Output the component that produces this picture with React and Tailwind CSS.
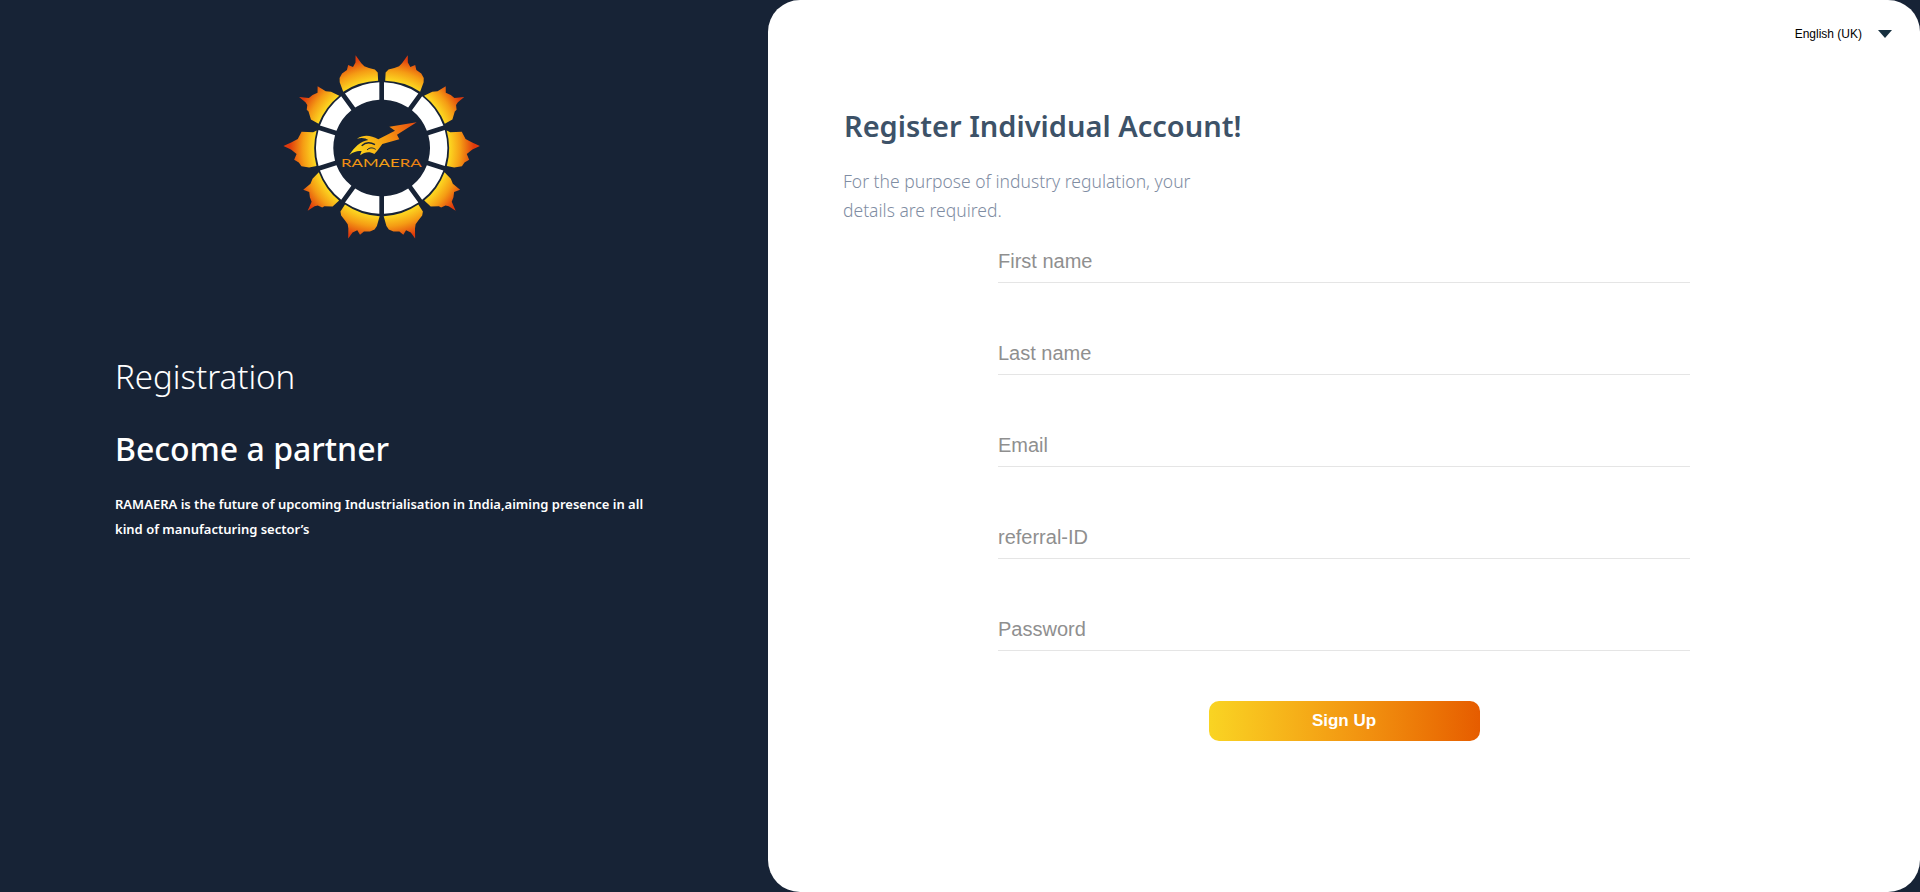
const SEGOE = "font-['Noto_Sans','Open_Sans',sans-serif]";

// flame outlines as [angle offset, radius] pairs around the petal centre
const FLAME_TOP = [
  [-15, 193], [-15, 212], [-13, 222], [-9, 230], [-6, 238], [-4.5, 250], [-2.3, 290],
  [-1, 258], [1.5, 246], [4, 258], [6, 244], [10, 241], [13, 232], [14.5, 220], [16.3, 196],
];
const FLAME_DIAG = [
  [-15, 193], [-12, 212], [-9.4, 225], [-7.9, 256], [-4.8, 242], [-1.5, 250], [1.5, 254], [4.3, 292],
  [5, 256], [6, 246], [9, 240], [9.5, 232], [14, 214], [15, 194],
];
const FLAME_SIDE = [
  [-15, 193], [-13, 203], [-11.4, 232], [-6.2, 241], [-3.5, 262], [-1.2, 296], [1, 262], [4, 244],
  [7.7, 254], [10, 240], [12.8, 234], [15, 210], [15.5, 194],
];

const polar = (deg, r) => {
  const a = (deg * Math.PI) / 180;
  return [Math.sin(a) * r, -Math.cos(a) * r];
};

const sector = (center) => {
  const half = 18;
  const gap = 7;
  const outer = 197;
  const inner = 145;
  const dOut = (Math.asin(gap / outer) * 180) / Math.PI;
  const dIn = (Math.asin(gap / inner) * 180) / Math.PI;
  const a = polar(center - half + dOut, outer);
  const b = polar(center + half - dOut, outer);
  const c = polar(center + half - dIn, inner);
  const d = polar(center - half + dIn, inner);
  return `M${a} A${outer} ${outer} 0 0 1 ${b} L${c} A${inner} ${inner} 0 0 0 ${d} Z`;
};

const flame = (center, outline) => {
  const pts = outline.map(([o, r]) => {
    const body = r > 205 && r < 270 ? 8 : 0;
    return polar(center + o, 202 + (r - 193) * 0.9 + body);
  });
  return `M${pts.map((p) => p.join(' ')).join(' L')} A204 204 0 0 0 ${pts[0]} Z`;
};

const PETALS = [
  { c: 18, outline: FLAME_TOP },
  { c: 54, outline: FLAME_DIAG },
  { c: 90, outline: FLAME_SIDE },
  { c: 126, outline: FLAME_DIAG },
  { c: 162, outline: FLAME_TOP },
];

function Logo() {
  return (
    <svg viewBox="0 0 660 630" className="w-[220px] h-[210px]">
      <defs>
        <radialGradient id="flameFill" gradientUnits="userSpaceOnUse" cx="0" cy="0" r="285">
          <stop offset="0.72" stopColor="#fcd420" />
          <stop offset="0.83" stopColor="#f59c14" />
          <stop offset="0.97" stopColor="#e03a0c" />
        </radialGradient>
        <linearGradient id="rocketFill" gradientUnits="userSpaceOnUse" x1="235" y1="340" x2="437" y2="247">
          <stop offset="0" stopColor="#fde01d" />
          <stop offset="0.45" stopColor="#f7a812" />
          <stop offset="1" stopColor="#e8480f" />
        </linearGradient>
        <linearGradient id="wordFill" gradientUnits="userSpaceOnUse" x1="210" y1="0" x2="452" y2="0">
          <stop offset="0" stopColor="#f08a12" />
          <stop offset="0.5" stopColor="#f5a516" />
          <stop offset="1" stopColor="#ec7a10" />
        </linearGradient>
      </defs>

      <g transform="translate(332 324)">
        {PETALS.map((p) => (
          <g key={p.c}>
            <path d={sector(p.c)} fill="#ffffff" />
            <path d={sector(p.c)} fill="#ffffff" transform="scale(-1 1)" />
            <path d={flame(p.c, p.outline)} fill="url(#flameFill)" />
            <path d={flame(p.c, p.outline)} fill="url(#flameFill)" transform="scale(-1 1)" />
          </g>
        ))}
      </g>

      {/* rocket */}
      <path
        d="M437 247 L355 260 L372 272 L322 298 C300 286 280 282 258 296 C272 292 284 294 292 300 C268 304 250 322 235 345 C250 334 262 332 272 334 C270 338 268 342 268 346 C280 336 296 334 310 342 C322 330 326 322 334 312 L385 298 L378 284 Z"
        fill="url(#rocketFill)"
      />
      <path d="M272 317 C284 306 298 306 312 314" fill="none" stroke="#172335" strokeWidth="4" />
      <path d="M288 330 C296 322 304 322 314 328" fill="none" stroke="#172335" strokeWidth="3" />

      <text
        x="210"
        y="380"
        textLength="242"
        lengthAdjust="spacingAndGlyphs"
        fill="url(#wordFill)"
        className="font-['Lato',sans-serif] text-[34px]"
      >
        RAMAERA
      </text>
    </svg>
  );
}

function Field({ placeholder, type = 'text' }) {
  return (
    <input
      type={type}
      placeholder={placeholder}
      className="w-full h-[42px] border-b border-[#e5e5e5] bg-transparent text-xl outline-none placeholder:text-[#8f8f8f] font-['Liberation_Sans',Arial,sans-serif]"
    />
  );
}

export default function App() {
  return (
    <div className="flex h-[892px] bg-[#172336] overflow-hidden">
      {/* Left panel */}
      <div className={`w-2/5 shrink-0 text-white ${SEGOE}`}>
        <div className="flex justify-center pt-[40px] pr-[6px]">
          <Logo />
        </div>
        <div className="pl-[115px] pr-[100px] pt-[105px]">
          <h1 className="text-[33px] font-light leading-[44px]">Registration</h1>
          <h2 className="mt-[28px] text-[32px] font-medium leading-[44px]">Become a partner</h2>
          <p className="mt-[21px] text-[13px] font-semibold leading-[25px]">
            RAMAERA is the future of upcoming Industrialisation in India,aiming presence in all kind of manufacturing sector’s
          </p>
        </div>
      </div>

      {/* Right panel */}
      <div className="flex-1 bg-white rounded-[32px]">
        <div className="flex justify-end items-center gap-4 pt-[26px] pr-[28px] font-['Liberation_Sans',Arial,sans-serif] text-xs text-black">
          <span>English (UK)</span>
          <span className="w-0 h-0 border-x-[7px] border-x-transparent border-t-[8px] border-t-[#17303f]" />
        </div>

        <div className={`pl-[76px] pt-[64px] ${SEGOE}`}>
          <h2 className="text-[29px] font-semibold leading-[40px] text-[#3d5268]">Register Individual Account!</h2>
          <p className="-ml-[1px] mt-[21px] w-[380px] text-[17.5px] font-light leading-[29px] text-[#7f8da3]">
            For the purpose of industry regulation, your details are required.
          </p>
        </div>

        <form className="mx-auto w-[692px] pt-[16px]">
          <div className="flex flex-col gap-[50px]">
            <Field placeholder="First name" />
            <Field placeholder="Last name" />
            <Field placeholder="Email" type="email" />
            <Field placeholder="referral-ID" />
            <Field placeholder="Password" type="password" />
          </div>
          <div className="flex justify-center pt-[50px]">
            <button
              type="button"
              className="w-[271px] h-10 rounded-[10px] bg-gradient-to-r from-[#f9d423] to-[#e65c00] text-[17px] text-white font-bold font-['Liberation_Sans',Arial,sans-serif]"
            >
              Sign Up
            </button>
          </div>
        </form>
      </div>
    </div>
  );
}
